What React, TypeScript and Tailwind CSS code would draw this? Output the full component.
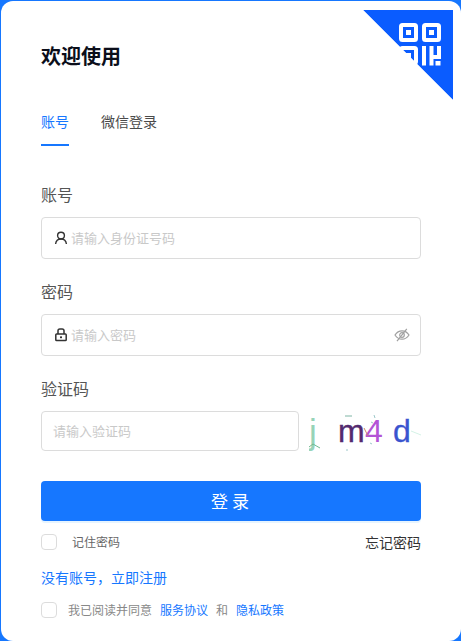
import React from 'react';

const cjk = "font-['Noto_Sans_CJK_SC','Noto_Sans',sans-serif]";

function QrCorner() {
  return (
    <svg className="absolute top-[9px] right-[8px]" width="90" height="90" viewBox="0 0 90 90">
      <polygon points="0,0 90,0 90,90" fill="#0a5cff" />
      <g fill="none" stroke="#fff" strokeWidth="4">
        <rect x="38" y="15" width="15" height="15" rx="1.5" />
        <rect x="61" y="15" width="15" height="15" rx="1.5" />
        <rect x="38" y="38" width="15" height="15" rx="1.5" />
        <path d="M61 36v19.500M68.500 36v11h7.500V36M68.500 47v8.500" />
      </g>
      <g fill="#fff">
        <rect x="43" y="20" width="5" height="5" />
        <rect x="66" y="20" width="5" height="5" />
        <rect x="43" y="43" width="5" height="5" />
        <rect x="72.500" y="51" width="5" height="4.500" />
      </g>
      <polygon points="0,0 0,90 90,90" fill="#fff" />
    </svg>
  );
}

function UserIcon() {
  return (
    <svg width="14" height="14" viewBox="0 0 14 14" fill="none" stroke="#333" strokeWidth="1.4" className="shrink-0">
      <circle cx="7" cy="4.600" r="3.400" />
      <path d="M1.600 13c.3-3 2.400-5 5.400-5s5.100 2 5.400 5" />
    </svg>
  );
}

function LockIcon() {
  return (
    <svg width="14" height="14" viewBox="0 0 14 14" fill="none" stroke="#333" strokeWidth="1.500" className="shrink-0">
      <rect x="1.800" y="6" width="10.400" height="6.600" rx="0.800" />
      <path d="M4 6V2.800C4 1.800 4.800 1 5.800 1h2.400c1 0 1.800.8 1.800 1.800V6" />
      <rect x="6" y="8.400" width="2" height="1.800" fill="#333" stroke="none" />
    </svg>
  );
}

function EyeSlashIcon() {
  return (
    <svg width="16" height="16" viewBox="0 0 16 16" fill="none" stroke="#a0a0a0" strokeWidth="1.200" className="shrink-0">
      <path d="M1 8c1.800-2.800 4-4.200 7-4.200S13.200 5.200 15 8c-1.800 2.800-4 4.200-7 4.200S2.800 10.800 1 8z" />
      <circle cx="8" cy="8" r="2.300" />
      <path d="M12.800 1.800L3 14.200" />
    </svg>
  );
}

function Captcha() {
  return (
    <svg width="112" height="40" viewBox="0 0 112 40" className="shrink-0">
      <g fontFamily="'Liberation Sans', sans-serif">
        <text x="0" y="33" fontSize="35" fill="#97d3b8">j</text>
        <text x="29" y="31" fontSize="32" fill="#532a6f" stroke="#532a6f" strokeWidth="0.400">m</text>
        <text x="56" y="31" fontSize="32" fill="#b354d6">4</text>
        <text x="84" y="31" fontSize="32" fill="#3a54cf" stroke="#3a54cf" strokeWidth="0.300">d</text>
      </g>
      <path d="M0 36l4-3 7 4" stroke="#6fb98f" strokeWidth="1" fill="none" />
      <path d="M36 5h7" stroke="#7fb5a5" strokeWidth="1" />
      <path d="M55 17l4 8" stroke="#c98a6a" strokeWidth="1" />
      <path d="M65 4l1 3M62 11l2 1M61 32l2 1M37 39h2" stroke="#9cc7c9" strokeWidth="1" />
      <path d="M102 20l10 4" stroke="#d4f2e6" strokeWidth="1" />
    </svg>
  );
}

export default function App() {
  return (
    <div className={`h-[641px] w-[461px] overflow-hidden bg-[#1677ff] pt-px pl-px ${cjk}`}>
      <div className="relative h-[640px] w-[460px] rounded-xl bg-white pl-10 pr-10">
        <QrCorner />

        <h1 className="pt-[41px] text-[20px] leading-[28px] font-bold text-[#0b0e1a]">欢迎使用</h1>

        <div className="mt-[38px] flex gap-[32px] text-[14px]">
          <div className="flex h-[38px] w-7 flex-col justify-between">
            <span className="leading-[26px] text-[#1677ff]">账号</span>
            <span className="h-0.5 bg-[#1677ff]" />
          </div>
          <span className="leading-[26px] text-[#4a4a4a]">微信登录</span>
        </div>

        <label className="mt-[35px] block text-[16px] leading-[26px] text-[#555]">账号</label>
        <div className="mt-[10px] flex h-[42px] items-center rounded border border-[#dcdcdc] pl-[12px]">
          <UserIcon />
          <span className="ml-[3px] text-[13px] text-[#c9c9c9]">请输入身份证号码</span>
        </div>

        <label className="mt-[19px] block text-[16px] leading-[26px] text-[#555]">密码</label>
        <div className="mt-[10px] flex h-[42px] items-center rounded border border-[#dcdcdc] pl-[12px] pr-[10px]">
          <LockIcon />
          <span className="ml-[3px] flex-1 text-[13px] text-[#c9c9c9]">请输入密码</span>
          <EyeSlashIcon />
        </div>

        <label className="mt-[19px] block text-[16px] leading-[26px] text-[#555]">验证码</label>
        <div className="mt-[10px] flex items-center gap-[10px]">
          <div className="flex h-10 w-[258px] items-center rounded border border-[#dcdcdc] pl-[11px]">
            <span className="text-[13px] text-[#c9c9c9]">请输入验证码</span>
          </div>
          <Captcha />
        </div>

        <button className="mt-[30px] block h-10 w-[380px] rounded bg-[#1677ff] pl-[2px] text-[17px] tracking-[4px] text-white shadow-[0_2px_0_#e6f4ff]">
          登录
        </button>

        <div className="mt-[13px] flex h-4 items-center">
          <span className="h-4 w-4 rounded border border-[#dcdcdc]" />
          <span className="ml-[15px] flex-1 text-[12px] text-[#666]">记住密码</span>
          <span className="text-[14px] text-[#333]">忘记密码</span>
        </div>

        <div className="mt-[17px] text-[14px] leading-[20px] text-[#1677ff]">没有账号，立即注册</div>

        <div className="mt-[15px] flex h-4 items-center text-[12px]">
          <span className="h-4 w-4 rounded border border-[#dcdcdc]" />
          <span className="ml-[11px] text-[#888]">我已阅读并同意</span>
          <span className="ml-2 text-[#1677ff]">服务协议</span>
          <span className="ml-2 text-[#888]">和</span>
          <span className="ml-2 text-[#1677ff]">隐私政策</span>
        </div>
      </div>
    </div>
  );
}
